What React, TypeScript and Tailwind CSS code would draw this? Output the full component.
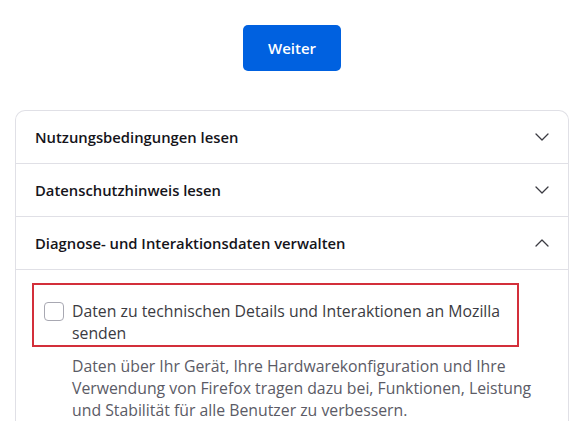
import React from "react";

function Chevron({ up }: { up?: boolean }) {
  return (
    <svg width="16" height="16" viewBox="0 0 16 16" fill="none" className="text-[#3b3b42]">
      <path
        d={up ? "M2 11 8 5l6 6" : "M2 5l6 6 6-6"}
        stroke="currentColor"
        strokeWidth="1.3"
        strokeLinecap="round"
        strokeLinejoin="round"
      />
    </svg>
  );
}

const rows = [
  { label: "Nutzungsbedingungen lesen", open: false },
  { label: "Datenschutzhinweis lesen", open: false },
  { label: "Diagnose- und Interaktionsdaten verwalten", open: true },
];

export default function App() {
  return (
    <div className="h-[424px] overflow-hidden bg-white text-[#15141a] font-['Open_Sans','Noto_Sans',sans-serif]">
      <div className="flex justify-center pt-[25px] pl-[4px]">
        <button className="h-[46px] w-[98px] rounded-[5px] bg-[#0061e0] text-[15px] font-semibold text-white">
          Weiter
        </button>
      </div>

      <div className="mt-[39px] ml-[15px] w-[554px] rounded-t-[10px] border border-b-0 border-[#e0e0e6]">
        {rows.map((r) => (
          <div
            key={r.label}
            className="flex h-[53px] items-center justify-between border-b border-[#e0e0e6] pl-[19px] pr-[18px]"
          >
            <span className="text-[14.8px] font-semibold">{r.label}</span>
            <Chevron up={r.open} />
          </div>
        ))}

        <div className="pt-[13px] pl-[16px]">
          <div className="flex w-[487px] items-start gap-[8px] border-2 border-[#d32f3a] pt-[15px] pb-[1px] pl-[10px]">
            <span className="mt-[2px] h-[19px] w-[20px] shrink-0 rounded-[4px] border border-[#a8a8b2] bg-white" />
            <span className="text-[15.8px] leading-[22px] text-[#3b3b42]">
              Daten zu technischen Details und Interaktionen an Mozilla senden
            </span>
          </div>
          <p className="mt-[8px] ml-[40px] w-[470px] text-[15.8px] leading-[22px] text-[#5b5b66]">
            Daten über Ihr Gerät, Ihre Hardwarekonfiguration und Ihre Verwendung von Firefox tragen dazu bei,
            Funktionen, Leistung und Stabilität für alle Benutzer zu verbessern.
          </p>
        </div>
      </div>
    </div>
  );
}
